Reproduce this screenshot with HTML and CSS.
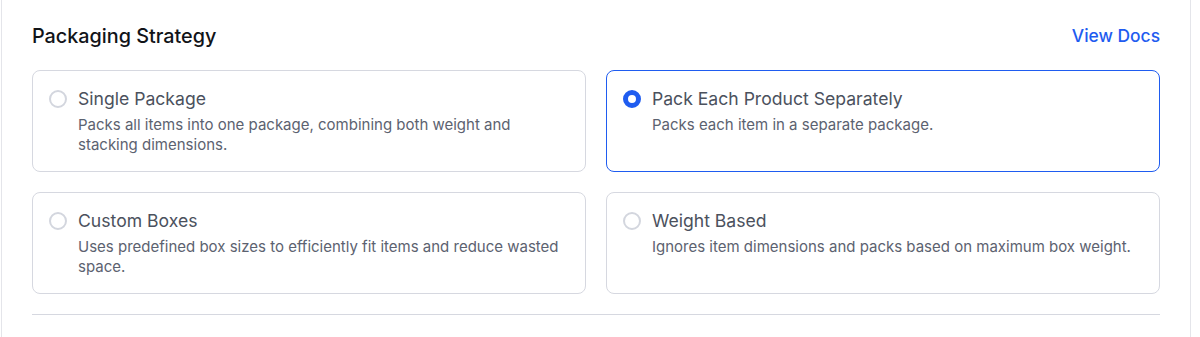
FILE: index.html
```html
<!DOCTYPE html>
<html>
	<head>
		<meta http-equiv="content-type" content="text/html; charset=utf-8" />
		<link rel="stylesheet" href="styles.css">
	</head>

	<body>
		<div class="panel">
			<div class="panel-head">
				<h2 class="panel-title">Packaging Strategy</h2>
				<a class="docs-link" href="#">View Docs</a>
			</div>

			<div class="option-grid">
				<label class="option">
					<span class="radio"></span>
					<span class="option-body">
						<span class="option-title">Single Package</span>
						<span class="option-desc">Packs all items into one package, combining both weight and stacking dimensions.</span>
					</span>
				</label>
				<label class="option selected">
					<span class="radio"></span>
					<span class="option-body">
						<span class="option-title">Pack Each Product Separately</span>
						<span class="option-desc">Packs each item in a separate package.</span>
					</span>
				</label>
				<label class="option">
					<span class="radio"></span>
					<span class="option-body">
						<span class="option-title">Custom Boxes</span>
						<span class="option-desc">Uses predefined box sizes to efficiently fit items and reduce wasted space.</span>
					</span>
				</label>
				<label class="option">
					<span class="radio"></span>
					<span class="option-body">
						<span class="option-title">Weight Based</span>
						<span class="option-desc">Ignores item dimensions and packs based on maximum box weight.</span>
					</span>
				</label>
			</div>

			<div class="divider"></div>
		</div>
	</body>
</html>
```

FILE: styles.css
```css
html, body {
	margin: 0;
	padding: 0;
	background: #ffffff;
}

body {
	font-family: Inter, "Noto Sans", sans-serif;
	overflow: hidden;
}

.panel {
	width: 1128px;
	height: 315px;
	margin-left: 1px;
	padding: 22px 30px 0 30px;
	border-left: 1px solid #e4e5ea;
	border-right: 1px solid #e4e5ea;
}

.panel-head {
	display: flex;
	justify-content: space-between;
	align-items: center;
	margin-bottom: 20px;
}

.panel-title {
	margin: 0;
	font-size: 19.8px;
	line-height: 28px;
	font-weight: 500;
	color: #111318;
}

.docs-link {
	font-size: 17.4px;
	line-height: 28px;
	font-weight: 500;
	color: #1f5cf0;
	text-decoration: none;
}

.option-grid {
	display: grid;
	grid-template-columns: 1fr 1fr;
	gap: 20px;
}

.option {
	display: flex;
	align-items: flex-start;
	gap: 11px;
	padding: 16px;
	border: 1px solid #d6d8e0;
	border-radius: 8px;
	cursor: pointer;
}

.option.selected {
	border-color: #1f5cf0;
}

.radio {
	flex: none;
	box-sizing: border-box;
	width: 18px;
	height: 18px;
	margin-top: 3px;
	border: 2px solid #d3d6de;
	border-radius: 50%;
	background: #ffffff;
}

.option.selected .radio {
	border: 5px solid #1f5cf0;
}

.option-body {
	display: flex;
	flex-direction: column;
	gap: 4px;
}

.option-title {
	font-size: 17.6px;
	line-height: 24px;
	font-weight: 400;
	color: #4b515d;
}

.option-desc {
	font-size: 15px;
	line-height: 20px;
	color: #5c6270;
	min-height: 40px;
}

.divider {
	height: 1px;
	margin-top: 20px;
	background: #d6d8e0;
}
```
